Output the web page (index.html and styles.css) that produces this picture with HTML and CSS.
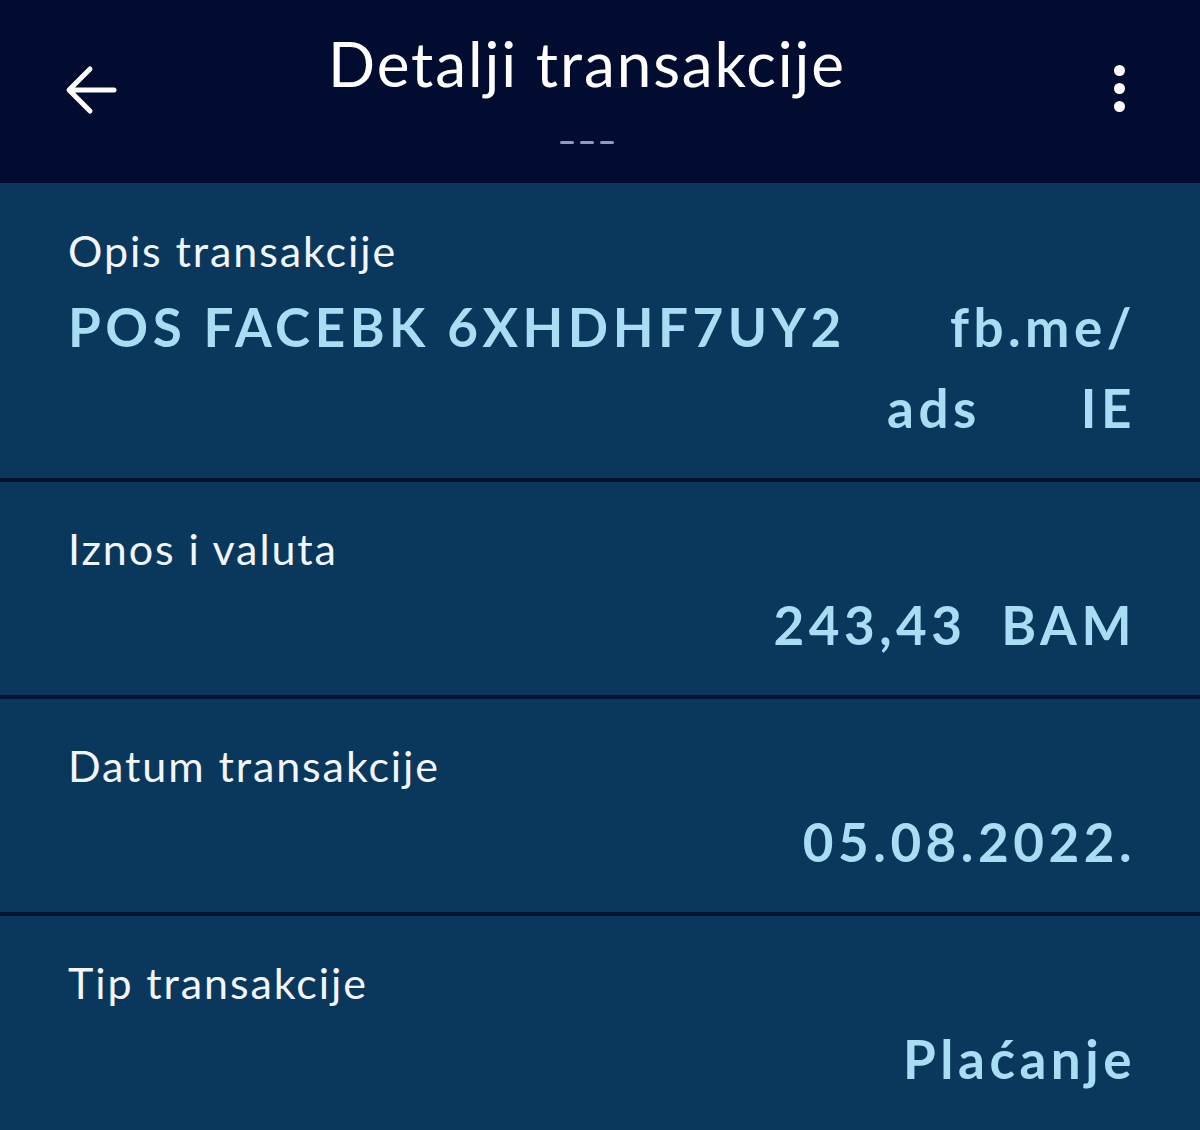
FILE: index.html
```html
<!DOCTYPE html>
<html lang="bs">
<head>
    <meta charset="UTF-8">
    <meta name="viewport" content="width=device-width, initial-scale=1.0">
    <title>Detalji transakcije</title>
    <link rel="stylesheet" href="styles.css">
</head>
<body>
    <div class="screen">
        <header class="topbar">
            <button class="icon-btn back" aria-label="Nazad">
                <svg width="58" height="58" viewBox="0 0 58 58">
                    <path d="M52 29 H8 M28 8 L7 29 L28 50" fill="none" stroke="#fff" stroke-width="5" stroke-linecap="round" stroke-linejoin="round"/>
                </svg>
            </button>
            <div class="title-wrap">
                <h1 class="title">Detalji transakcije</h1>
                <div class="dashes"><span></span><span></span><span></span></div>
            </div>
            <button class="icon-btn more" aria-label="Više">
                <span class="dot"></span>
                <span class="dot"></span>
                <span class="dot"></span>
            </button>
        </header>

        <section class="row">
            <div class="label">Opis transakcije</div>
            <div class="value multi">
                <div class="line spread"><span>POS FACEBK 6XHDHF7UY2</span><span>fb.me/</span></div>
                <div class="line end"><span>ads</span><span>IE</span></div>
            </div>
        </section>

        <section class="row">
            <div class="label">Iznos i valuta</div>
            <div class="value">243,43&nbsp;&nbsp;BAM</div>
        </section>

        <section class="row">
            <div class="label">Datum transakcije</div>
            <div class="value">05.08.2022.</div>
        </section>

        <section class="row last">
            <div class="label">Tip transakcije</div>
            <div class="value">Plaćanje</div>
        </section>
    </div>
</body>
</html>
```

FILE: styles.css
```css
* {
    margin: 0;
    padding: 0;
    box-sizing: border-box;
}

body {
    font-family: 'Lato', 'Noto Sans', sans-serif;
    background: #0a375c;
    width: 1200px;
    height: 1130px;
    overflow: hidden;
}

.screen {
    width: 1200px;
    min-height: 1130px;
    background: #0a375c;
}

.topbar {
    height: 183px;
    background: #020c30;
    display: grid;
    grid-template-columns: 147px 1fr 173px;
    align-items: start;
}

.icon-btn {
    background: none;
    border: none;
    cursor: pointer;
}

.back {
    margin: 61px 0 0 62px;
    width: 58px;
    height: 58px;
    display: flex;
}

.more {
    justify-self: end;
    margin: 65px 75px 0 0;
    width: 12px;
    display: flex;
    flex-direction: column;
    align-items: center;
    gap: 7px;
}

.dot {
    width: 11px;
    height: 11px;
    border-radius: 50%;
    background: #fff;
}

.title-wrap {
    display: flex;
    flex-direction: column;
    align-items: center;
    padding-top: 26px;
}

.title {
    font-weight: 400;
    font-size: 62px;
    line-height: 74px;
    color: #fff;
    letter-spacing: 1.9px;
}

.dashes {
    display: flex;
    gap: 6px;
    margin-top: 41px;
}

.dashes span {
    width: 14px;
    height: 3px;
    border-radius: 2px;
    background: #8c9cc0;
}

.row {
    padding: 41px 68px 30px;
    border-bottom: 4px solid #031232;
}

.row:first-of-type {
    padding-top: 42px;
}

.row.last {
    border-bottom: none;
}

.label {
    font-size: 43px;
    line-height: 52px;
    color: #f2f6fa;
    letter-spacing: 1.9px;
}

.value {
    margin-top: 9px;
    margin-right: -4px;
    font-size: 53px;
    line-height: 81px;
    font-weight: 700;
    color: #a8ddf4;
    text-align: right;
    letter-spacing: 4.5px;
}

.value .line {
    display: flex;
}

.value .spread {
    justify-content: space-between;
}

.value .end {
    justify-content: flex-end;
    gap: 100px;
}
```
